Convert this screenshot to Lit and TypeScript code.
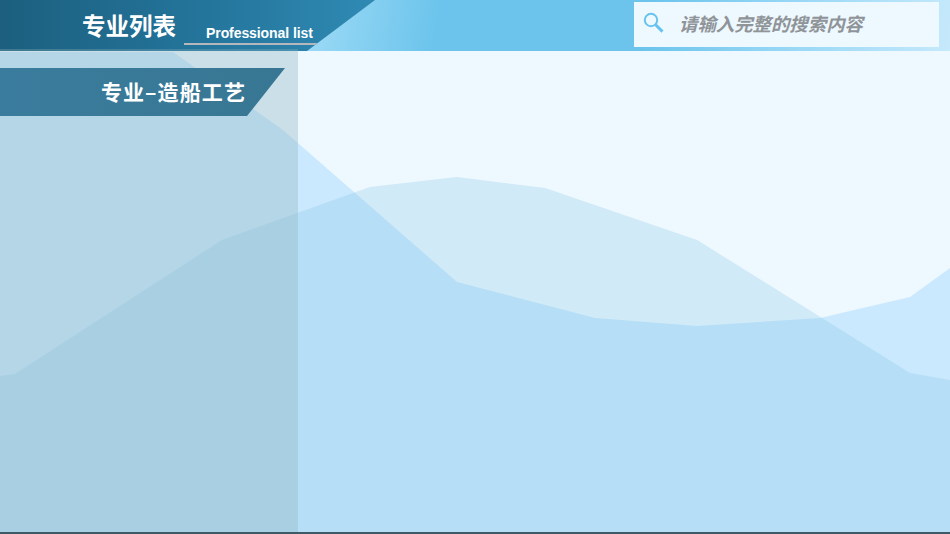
import { LitElement, html, css, svg } from "lit";
import { customElement } from "lit/decorators.js";

const BACK_WAVE = "173,52 283,130 457,282 595,318 697,326 820,318 910,297 950,268 950,534 0,534 0,52";
const FRONT_WAVE = "0,376 15,374 222,240 370,187 457,177 545,188 697,240 910,373 950,380 950,534 0,534";

@customElement("app-root")
export class AppRoot extends LitElement {
  static styles = css`
    :host {
      display: block;
      position: relative;
      width: 950px;
      height: 534px;
      overflow: hidden;
      background: #eef8ff;
      font-family: "Liberation Sans", "Noto Sans CJK SC", sans-serif;
      box-sizing: border-box;
      border-bottom: 2px solid #3d5a66;
    }
    .waves { position: absolute; inset: 0; width: 950px; height: 534px; }
    .shell { position: relative; display: flex; flex-direction: column; height: 532px; }
    .header {
      position: relative;
      height: 51px;
      flex: none;
      display: flex;
      justify-content: flex-end;
      align-items: flex-start;
      padding: 2px 11px 0 0;
      box-sizing: border-box;
      background: linear-gradient(100deg, #9ad9f5 33%, #6cc4ec 46%, #6cc4ec 68%, #8fd4f4 80%, #c6e9fb 100%);
    }
    .brand {
      position: absolute;
      left: 0;
      top: 0;
      width: 376px;
      height: 51px;
      box-sizing: border-box;
      padding-left: 82px;
      display: flex;
      align-items: flex-start;
      background: linear-gradient(90deg, #1c5f7e 0%, #24759c 55%, #2f8ab3 100%);
      clip-path: polygon(0 0, 375px 0, 307px 51px, 0 51px);
      color: #fff;
      font-weight: 700;
    }
    .brand h1 {
      margin: 10px 0 0;
      font-family: "Noto Sans CJK SC", sans-serif;
      font-size: 23.5px;
      line-height: 30px;
      font-weight: 700;
    }
    .sub {
      margin: 22px 0 0 8px;
      width: 134px;
      height: 23px;
      box-sizing: border-box;
      padding: 1px 0 0 22px;
      font-size: 14px;
      line-height: 20px;
      letter-spacing: -0.08px;
      border-bottom: 2px solid #b4b8bc;
    }
    .rim {
      position: absolute;
      left: 0;
      bottom: 0;
      width: 298px;
      height: 2px;
      background: rgba(145, 183, 192, 0.3);
    }
    .search {
      width: 305px;
      height: 45px;
      display: flex;
      align-items: center;
      gap: 16px;
      padding-left: 9px;
      box-sizing: border-box;
      background: #eef8ff;
      color: #8f9498;
      font-family: "Noto Sans CJK SC", sans-serif;
      font-style: italic;
      font-weight: 700;
      font-size: 18.4px;
    }
    .search svg { width: 21px; height: 22px; flex: none; margin-top: -3px; }
    .search span { margin: -4px 0 0 -1px; }
    .side {
      flex: 1;
      width: 298px;
      padding-top: 17px;
      box-sizing: border-box;
      background: rgba(145, 183, 192, 0.37);
    }
    .banner {
      width: 285px;
      height: 48px;
      box-sizing: border-box;
      padding: 0 39px 2px 0;
      display: flex;
      align-items: center;
      justify-content: flex-end;
      color: #fff;
      font-family: "Noto Sans CJK SC", sans-serif;
      font-weight: 700;
      font-size: 21px;
      letter-spacing: 1.1px;
      background: linear-gradient(90deg, #3a7c9d, #387793);
      clip-path: polygon(0 0, 285px 0, 247px 48px, 0 48px);
    }
  `;

  render() {
    return html`
      <svg class="waves" viewBox="0 0 950 534">
        ${svg`<polygon points=${BACK_WAVE} fill="#cbe9fe"></polygon>
        <polygon points=${FRONT_WAVE} fill="#76bee0" fill-opacity="0.25"></polygon>`}
      </svg>
      <div class="shell">
        <header class="header">
          <div class="brand">
            <h1>专业列表</h1>
            <div class="sub">Professional list</div>
          </div>
          <div class="rim"></div>
          <div class="search">
            <svg viewBox="0 0 21 22" fill="none" stroke="#67c3ee">
              <circle cx="8" cy="8" r="6.2" stroke-width="2"></circle>
              <path d="M12.6 12.8 L19.5 19.6" stroke-width="3"></path>
            </svg>
            <span>请输入完整的搜索内容</span>
          </div>
        </header>
        <aside class="side">
          <div class="banner">专业–造船工艺</div>
        </aside>
      </div>
    `;
  }
}
